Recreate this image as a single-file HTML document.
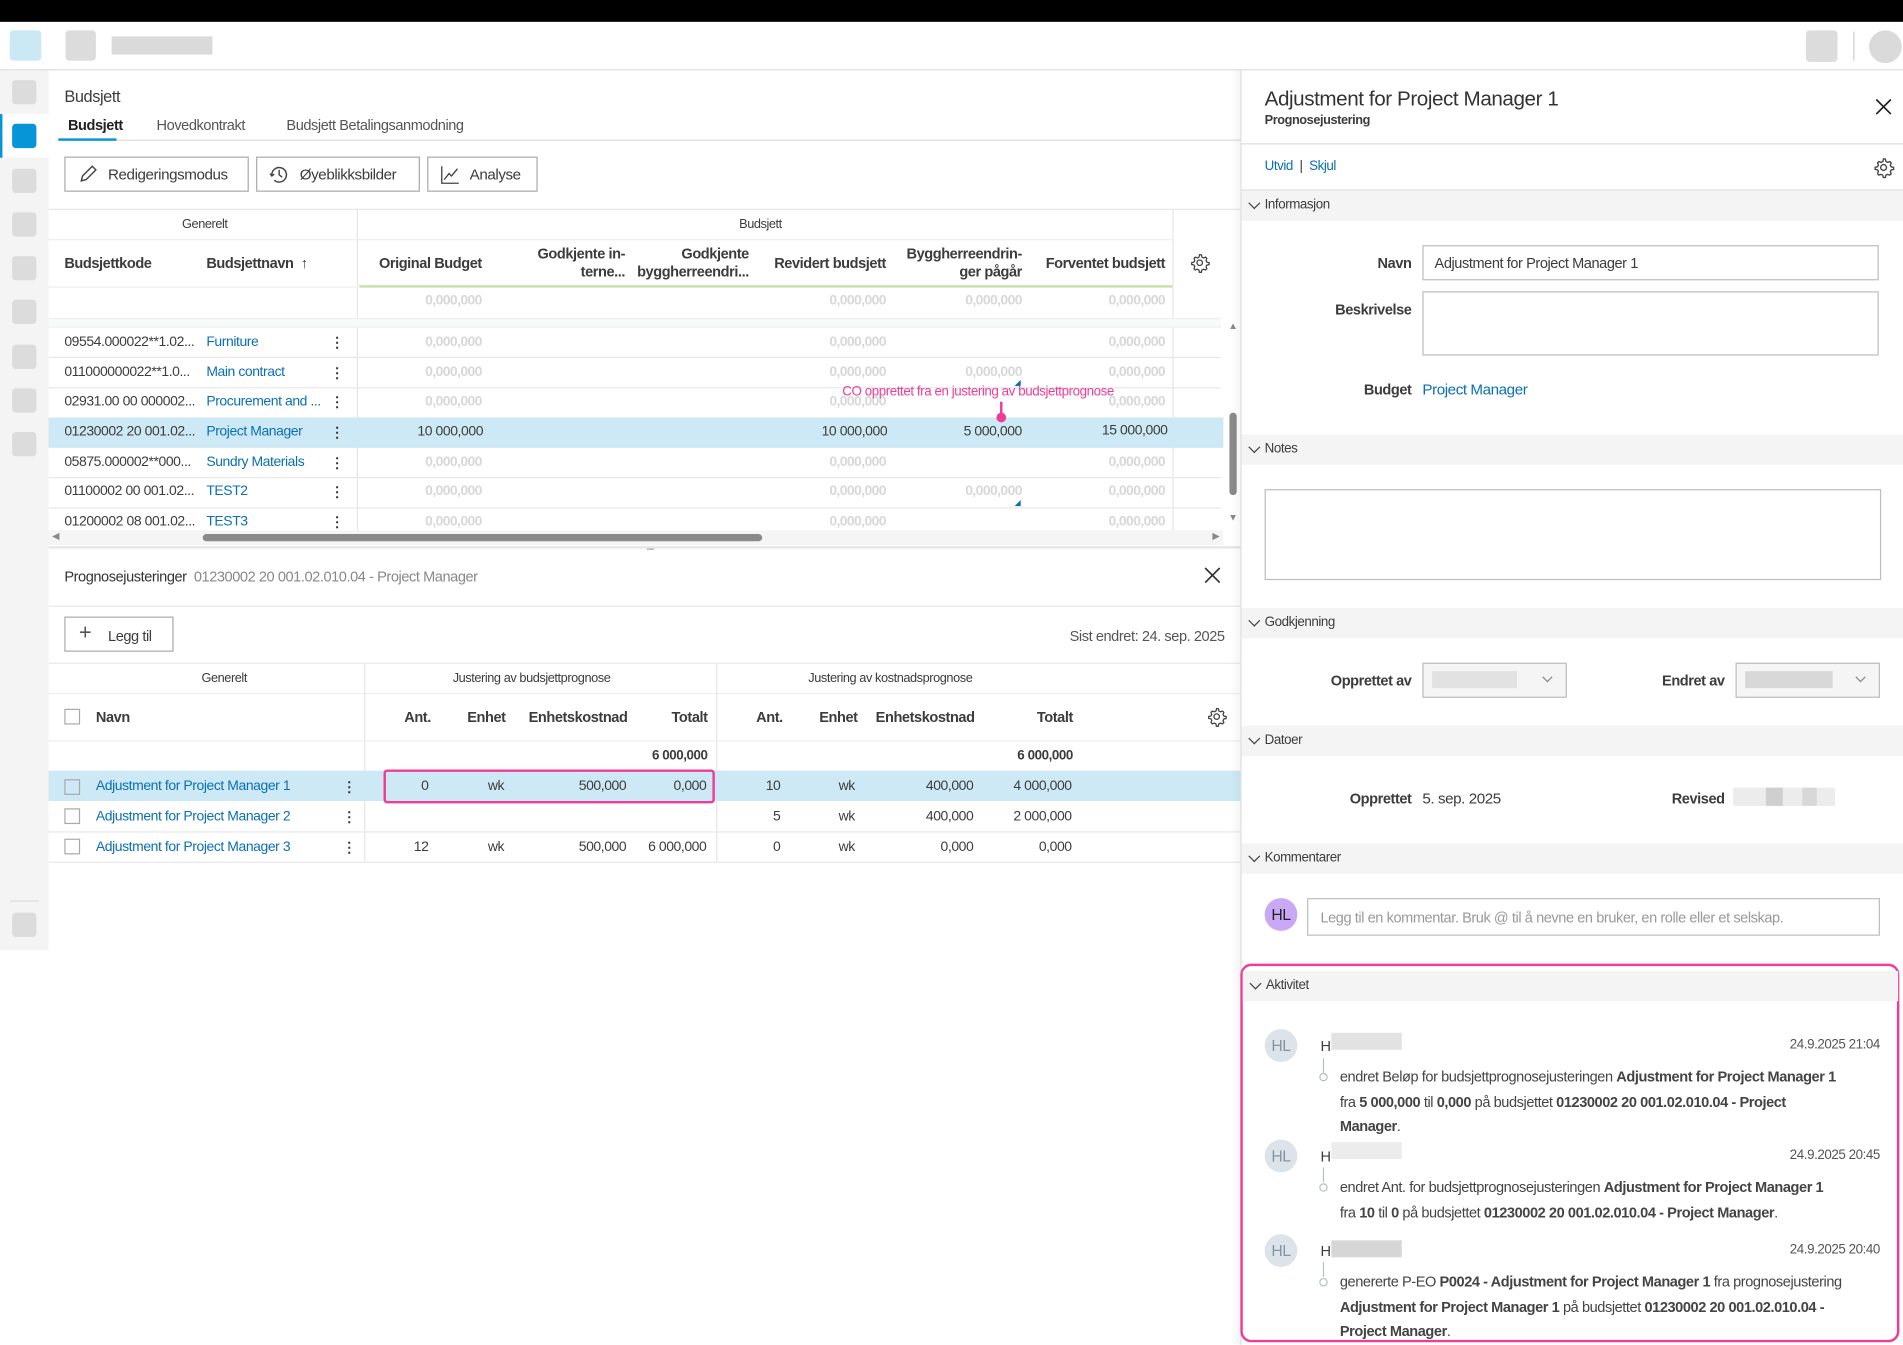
<!DOCTYPE html>
<html><head><meta charset="utf-8">
<style>
*{box-sizing:border-box;margin:0;padding:0}
html,body{width:1903px;height:1344px;overflow:hidden;background:#fff}
body{font-family:"Liberation Sans",sans-serif;color:#3c3c3c}
#w{position:absolute;left:0;top:0;width:1568px;height:1108px;transform:scale(1.21365);transform-origin:0 0;font-size:11.5px;letter-spacing:-0.35px}
.a{position:absolute;white-space:nowrap}
.g{background:#dcdcdc;border-radius:3px}
.hl{border-top:1px solid #e8e8e8}
.lnk{color:#0a6fb5}
.b{font-weight:bold}
.ph{color:#d8d8d8;font-weight:bold;letter-spacing:-0.5px}
.r{text-align:right}
.sec{position:absolute;left:1023px;width:545px;height:25px;background:#f4f4f4;font-size:11px;line-height:25px;padding-left:19px}
.sec:before{content:"";position:absolute;left:7px;top:7px;width:6px;height:6px;border-right:1.3px solid #444;border-bottom:1.3px solid #444;transform:rotate(45deg)}
.inp{position:absolute;border:1px solid #bdbdbd;background:#fff}
.lbl{position:absolute;font-weight:bold;text-align:right;font-size:12px}
.av{position:absolute;width:27px;height:27px;border-radius:50%;text-align:center;line-height:27px;font-size:13px}
.act{position:absolute;left:1104px;font-size:12px;line-height:20.5px;white-space:nowrap;color:#444}
.kb{position:absolute;width:3px}
.kb:before{content:"⋮";font-weight:bold;color:#333}
</style></head><body><div id="w">
<!-- top -->
<div class="a" style="left:0;top:0;width:1568px;height:18px;background:#000"></div>
<div class="a" style="left:8px;top:25px;width:26px;height:25px;background:#cbe8f5;border-radius:3px"></div>
<div class="a g" style="left:54px;top:25px;width:25px;height:25px"></div>
<div class="a" style="left:92px;top:30px;width:83px;height:15px;background:#dadada"></div>
<div class="a g" style="left:1488px;top:25px;width:26px;height:26px"></div>
<div class="a" style="left:1527px;top:26px;width:1px;height:24px;background:#ccc"></div>
<div class="a" style="left:1540px;top:25px;width:27px;height:27px;border-radius:50%;background:#dadada"></div>
<div class="a" style="left:0;top:57px;width:1568px;height:1px;background:#ddd"></div>
<!-- sidebar -->
<div class="a" style="left:0;top:58px;width:40px;height:725px;background:#f4f4f4"></div>
<div class="a" style="left:0;top:94px;width:40px;height:36px;background:#fff;border-left:2px solid #0696d7"></div>
<div class="a g" style="left:10px;top:66px;width:20px;height:20px"></div>
<div class="a" style="left:10px;top:102px;width:20px;height:20px;background:#0696d7;border-radius:3px"></div>
<div class="a g" style="left:10px;top:139px;width:20px;height:20px"></div>
<div class="a g" style="left:10px;top:175px;width:20px;height:20px"></div>
<div class="a g" style="left:10px;top:211px;width:20px;height:20px"></div>
<div class="a g" style="left:10px;top:247px;width:20px;height:20px"></div>
<div class="a g" style="left:10px;top:284px;width:20px;height:20px"></div>
<div class="a g" style="left:10px;top:320px;width:20px;height:20px"></div>
<div class="a g" style="left:10px;top:356px;width:20px;height:20px"></div>
<div class="a" style="left:8px;top:742px;width:24px;height:1px;background:#ddd"></div>
<div class="a g" style="left:10px;top:752px;width:20px;height:20px"></div>
<!-- page header -->
<div class="a" style="left:53px;top:72px;font-size:13.5px">Budsjett</div>
<div class="a b" style="left:56px;top:96px;font-size:12px;color:#222">Budsjett</div>
<div class="a" style="left:129px;top:96px;font-size:12px;color:#555">Hovedkontrakt</div>
<div class="a" style="left:236px;top:96px;font-size:12px;color:#555">Budsjett Betalingsanmodning</div>
<div class="a" style="left:48px;top:115px;width:974px;height:1px;background:#ddd"></div>
<div class="a" style="left:48px;top:114px;width:48px;height:2px;background:#0696d7"></div>
<!-- buttons -->
<div class="a" style="left:53px;top:129px;width:152px;height:29px;border:1px solid #aaa"></div>
<svg class="a" style="left:64px;top:135px" width="17" height="17" viewBox="0 0 17 17"><path d="M3 14l1-4 8-8 3 3-8 8z" fill="none" stroke="#444" stroke-width="1.2"/></svg>
<div class="a" style="left:89px;top:137px;font-size:12.5px">Redigeringsmodus</div>
<div class="a" style="left:211px;top:129px;width:135px;height:29px;border:1px solid #aaa"></div>
<svg class="a" style="left:221px;top:135px" width="18" height="18" viewBox="0 0 18 18"><path d="M3 9a6 6 0 1 1 2 4.5M1.5 8l1.5 2 2-1.6M9 5v4l2.5 2" fill="none" stroke="#444" stroke-width="1.2"/></svg>
<div class="a" style="left:247px;top:137px;font-size:12.5px">Øyeblikksbilder</div>
<div class="a" style="left:352px;top:129px;width:91px;height:29px;border:1px solid #aaa"></div>
<svg class="a" style="left:362px;top:135px" width="18" height="18" viewBox="0 0 18 18"><path d="M2 2v14h14M4 13l4-5 2 2 5-6" fill="none" stroke="#444" stroke-width="1.1"/></svg>
<div class="a" style="left:387px;top:137px;font-size:12.5px">Analyse</div>
<!-- top table -->
<div class="a" style="left:40px;top:172px;width:982px;height:1px;background:#e8e8e8"></div>
<div class="a" style="left:294px;top:172px;width:1px;height:266px;background:#e6e6e6"></div>
<div class="a" style="left:966px;top:172px;width:1px;height:266px;background:#e6e6e6"></div>
<div class="a" style="left:150px;top:179px;font-size:10.5px">Generelt</div>
<div class="a" style="left:609px;top:179px;font-size:10.5px">Budsjett</div>
<div class="a" style="left:40px;top:197px;width:926px;height:1px;background:#eee"></div>
<div class="a b" style="left:53px;top:210px;font-size:12px">Budsjettkode</div>
<div class="a b" style="left:170px;top:210px;font-size:12px">Budsjettnavn&nbsp; ↑</div>
<div class="a b r" style="left:290px;width:107px;top:210px;font-size:12px">Original Budget</div>
<div class="a b r" style="left:400px;width:115px;top:202px;font-size:12px;line-height:15px">Godkjente in-<br>terne...</div>
<div class="a b r" style="left:510px;width:107px;top:202px;font-size:12px;line-height:15px">Godkjente<br>byggherreendri...</div>
<div class="a b r" style="left:620px;width:110px;top:210px;font-size:12px">Revidert budsjett</div>
<div class="a b r" style="left:730px;width:112px;top:202px;font-size:12px;line-height:15px">Byggherreendrin-<br>ger pågår</div>
<div class="a b r" style="left:845px;width:115px;top:210px;font-size:12px">Forventet budsjett</div>
<svg class="a" style="left:980px;top:208px" width="17" height="17" viewBox="0 0 24 24"><path d="M12 2.5l2 .3.6 2.6 1.8 1 2.5-.9 1.4 1.5-.9 2.5 1 1.8 2.6.6v2.2l-2.6.6-1 1.8.9 2.5-1.5 1.4-2.5-.9-1.8 1-.6 2.6h-2.2l-.6-2.6-1.8-1-2.5.9-1.4-1.5.9-2.5-1-1.8-2.6-.6v-2.2l2.6-.6 1-1.8-.9-2.5 1.5-1.4 2.5.9 1.8-1 .6-2.6z" fill="none" stroke="#444" stroke-width="1.5"/><circle cx="12" cy="12" r="3.2" fill="none" stroke="#444" stroke-width="1.5"/></svg>
<div class="a" style="left:296px;top:235px;width:670px;height:2px;background:#c6e0a8"></div>
<div class="a" style="left:40px;top:236px;width:254px;height:1px;background:#eee"></div>
<div class="a ph r" style="left:300px;width:97px;top:242px">0,000,000</div>
<div class="a ph r" style="left:620px;width:110px;top:242px">0,000,000</div>
<div class="a ph r" style="left:730px;width:112px;top:242px">0,000,000</div>
<div class="a ph r" style="left:845px;width:115px;top:242px">0,000,000</div>
<div class="a" style="left:40px;top:262px;width:966px;height:8px;background:#f9fafa;border-top:1px solid #eee;border-bottom:1px solid #eee"></div>
<!-- rows -->
<div class="a" style="left:40px;top:344px;width:968px;height:25px;background:#cde9f5"></div>
<div class="a hl" style="left:40px;top:294px;width:966px"></div>
<div class="a hl" style="left:40px;top:319px;width:966px"></div>
<div class="a hl" style="left:40px;top:393px;width:966px"></div>
<div class="a hl" style="left:40px;top:418px;width:966px"></div>

<div class="a" style="left:53px;top:276px">09554.000022**1.02...</div><div class="a lnk" style="left:170px;top:276px">Furniture</div><div class="kb a" style="left:272px;top:275px"></div>
<div class="a" style="left:53px;top:301px">011000000022**1.0...</div><div class="a lnk" style="left:170px;top:301px">Main contract</div><div class="kb a" style="left:272px;top:300px"></div>
<div class="a" style="left:53px;top:325px">02931.00 00 000002...</div><div class="a lnk" style="left:170px;top:325px">Procurement and ...</div><div class="kb a" style="left:272px;top:324px"></div>
<div class="a" style="left:53px;top:350px">01230002 20 001.02...</div><div class="a lnk" style="left:170px;top:350px">Project Manager</div><div class="kb a" style="left:272px;top:349px"></div>
<div class="a" style="left:53px;top:375px">05875.000002**000...</div><div class="a lnk" style="left:170px;top:375px">Sundry Materials</div><div class="kb a" style="left:272px;top:374px"></div>
<div class="a" style="left:53px;top:399px">01100002 00 001.02...</div><div class="a lnk" style="left:170px;top:399px">TEST2</div><div class="kb a" style="left:272px;top:398px"></div>
<div class="a" style="left:53px;top:424px">01200002 08 001.02...</div><div class="a lnk" style="left:170px;top:424px">TEST3</div><div class="kb a" style="left:272px;top:423px"></div>

<div class="a ph r" style="left:300px;width:97px;top:276px">0,000,000</div><div class="a ph r" style="left:620px;width:110px;top:276px">0,000,000</div><div class="a ph r" style="left:845px;width:115px;top:276px">0,000,000</div>
<div class="a ph r" style="left:300px;width:97px;top:301px">0,000,000</div><div class="a ph r" style="left:620px;width:110px;top:301px">0,000,000</div><div class="a ph r" style="left:730px;width:112px;top:301px">0,000,000</div><div class="a ph r" style="left:845px;width:115px;top:301px">0,000,000</div>
<div class="a ph r" style="left:300px;width:97px;top:325px">0,000,000</div><div class="a ph r" style="left:620px;width:110px;top:325px">0,000,000</div><div class="a ph r" style="left:845px;width:115px;top:325px">0,000,000</div>
<div class="a r" style="left:300px;width:98px;top:350px">10 000,000</div><div class="a r" style="left:620px;width:111px;top:350px">10 000,000</div><div class="a r" style="left:730px;width:112px;top:350px">5 000,000</div><div class="a r" style="left:845px;width:117px;top:349px">15 000,000</div>
<div class="a ph r" style="left:300px;width:97px;top:375px">0,000,000</div><div class="a ph r" style="left:620px;width:110px;top:375px">0,000,000</div><div class="a ph r" style="left:845px;width:115px;top:375px">0,000,000</div>
<div class="a ph r" style="left:300px;width:97px;top:399px">0,000,000</div><div class="a ph r" style="left:620px;width:110px;top:399px">0,000,000</div><div class="a ph r" style="left:730px;width:112px;top:399px">0,000,000</div><div class="a ph r" style="left:845px;width:115px;top:399px">0,000,000</div>
<div class="a ph r" style="left:300px;width:97px;top:424px">0,000,000</div><div class="a ph r" style="left:620px;width:110px;top:424px">0,000,000</div><div class="a ph r" style="left:845px;width:115px;top:424px">0,000,000</div>
<div class="a" style="left:836px;top:313px;width:0;height:0;border-left:5px solid transparent;border-bottom:5px solid #0a6fb5"></div>
<div class="a" style="left:836px;top:412px;width:0;height:0;border-left:5px solid transparent;border-bottom:5px solid #0a6fb5"></div>
<div class="a" style="left:694px;top:317px;color:#f03c96;font-size:11px">CO opprettet fra en justering av budsjettprognose</div>
<div class="a" style="left:824px;top:331px;width:2px;height:12px;background:#f03c96"></div>
<div class="a" style="left:821px;top:340px;width:8px;height:8px;border-radius:50%;background:#f03c96"></div>
<!-- scrollbars -->
<div class="a" style="left:1012px;top:264px;color:#888;font-size:8px">▲</div>
<div class="a" style="left:1013px;top:340px;width:6px;height:68px;background:#8a8a8a;border-radius:3px"></div>
<div class="a" style="left:1012px;top:422px;color:#888;font-size:8px">▼</div>
<div class="a" style="left:40px;top:437px;width:968px;height:12px;background:#f5f5f5"></div>
<div class="a" style="left:43px;top:437px;color:#888;font-size:8px">◀</div>
<div class="a" style="left:167px;top:440px;width:461px;height:6px;background:#8a8a8a;border-radius:3px"></div>
<div class="a" style="left:999px;top:437px;color:#888;font-size:8px">▶</div>
<div class="a" style="left:40px;top:450px;width:982px;height:2px;background:#e6e6e6"></div>
<div class="a" style="left:533px;top:452px;width:6px;height:1px;background:#aaa"></div>
<!-- bottom panel -->
<div class="a" style="left:53px;top:468px;font-size:12px;color:#333">Prognosejusteringer <span style="color:#888">&nbsp;01230002 20 001.02.010.04 - Project Manager</span></div>
<svg class="a" style="left:992px;top:467px" width="14" height="14"><path d="M1 1l12 12M13 1L1 13" stroke="#333" stroke-width="1.4"/></svg>
<div class="a" style="left:40px;top:499px;width:982px;height:1px;background:#e8e8e8"></div>
<div class="a" style="left:53px;top:508px;width:90px;height:29px;border:1px solid #aaa"></div>
<div class="a" style="left:65px;top:511px;font-size:18px;color:#555;font-weight:300">+</div>
<div class="a" style="left:89px;top:517px;font-size:12px">Legg til</div>
<div class="a r" style="left:800px;width:209px;top:517px;font-size:12px;color:#555">Sist endret: 24. sep. 2025</div>
<div class="a" style="left:40px;top:546px;width:982px;height:1px;background:#e8e8e8"></div>
<div class="a" style="left:300px;top:547px;width:1px;height:163px;background:#e6e6e6"></div>
<div class="a" style="left:590px;top:547px;width:1px;height:163px;background:#e6e6e6"></div>
<div class="a" style="left:166px;top:553px;font-size:10.5px">Generelt</div>
<div class="a" style="left:373px;top:553px;font-size:10.5px">Justering av budsjettprognose</div>
<div class="a" style="left:666px;top:553px;font-size:10.5px">Justering av kostnadsprognose</div>
<div class="a" style="left:40px;top:571px;width:982px;height:1px;background:#eee"></div>
<div class="a" style="left:53px;top:584px;width:13px;height:13px;border:1px solid #aaa;background:#fff"></div>
<div class="a b" style="left:79px;top:584px;font-size:12px">Navn</div>
<div class="a b r" style="left:310px;width:45px;top:584px;font-size:12px">Ant.</div>
<div class="a b" style="left:385px;top:584px;font-size:12px">Enhet</div>
<div class="a b r" style="left:420px;width:97px;top:584px;font-size:12px">Enhetskostnad</div>
<div class="a b r" style="left:520px;width:63px;top:584px;font-size:12px">Totalt</div>
<div class="a b r" style="left:600px;width:45px;top:584px;font-size:12px">Ant.</div>
<div class="a b" style="left:675px;top:584px;font-size:12px">Enhet</div>
<div class="a b r" style="left:700px;width:103px;top:584px;font-size:12px">Enhetskostnad</div>
<div class="a b r" style="left:810px;width:74px;top:584px;font-size:12px">Totalt</div>
<svg class="a" style="left:994px;top:582px" width="17" height="17" viewBox="0 0 24 24"><path d="M12 2.5l2 .3.6 2.6 1.8 1 2.5-.9 1.4 1.5-.9 2.5 1 1.8 2.6.6v2.2l-2.6.6-1 1.8.9 2.5-1.5 1.4-2.5-.9-1.8 1-.6 2.6h-2.2l-.6-2.6-1.8-1-2.5.9-1.4-1.5.9-2.5-1-1.8-2.6-.6v-2.2l2.6-.6 1-1.8-.9-2.5 1.5-1.4 2.5.9 1.8-1 .6-2.6z" fill="none" stroke="#444" stroke-width="1.5"/><circle cx="12" cy="12" r="3.2" fill="none" stroke="#444" stroke-width="1.5"/></svg>
<div class="a" style="left:40px;top:610px;width:982px;height:1px;background:#eee"></div>
<div class="a b r" style="left:520px;width:63px;top:617px;font-size:11px">6 000,000</div>
<div class="a b r" style="left:810px;width:74px;top:617px;font-size:11px">6 000,000</div>
<div class="a" style="left:40px;top:635px;width:982px;height:25px;background:#cde9f5"></div>
<div class="a hl" style="left:40px;top:685px;width:982px"></div>
<div class="a hl" style="left:40px;top:710px;width:982px"></div>
<div class="a" style="left:316px;top:634px;width:273px;height:28px;border:2px solid #f03c96;border-radius:3px"></div>
<!-- rows bottom -->
<div class="a" style="left:53px;top:642px;width:13px;height:13px;border:1px solid #aaa"></div>
<div class="a lnk" style="left:79px;top:642px">Adjustment for Project Manager 1</div><div class="kb a" style="left:282px;top:641px"></div>
<div class="a r" style="left:310px;width:43px;top:642px">0</div><div class="a" style="left:402px;top:642px">wk</div><div class="a r" style="left:420px;width:96px;top:642px">500,000</div><div class="a r" style="left:520px;width:62px;top:642px">0,000</div>
<div class="a r" style="left:600px;width:43px;top:642px">10</div><div class="a" style="left:691px;top:642px">wk</div><div class="a r" style="left:700px;width:102px;top:642px">400,000</div><div class="a r" style="left:810px;width:73px;top:642px">4 000,000</div>
<div class="a" style="left:53px;top:666px;width:13px;height:13px;border:1px solid #aaa"></div>
<div class="a lnk" style="left:79px;top:667px">Adjustment for Project Manager 2</div><div class="kb a" style="left:282px;top:666px"></div>
<div class="a r" style="left:600px;width:43px;top:667px">5</div><div class="a" style="left:691px;top:667px">wk</div><div class="a r" style="left:700px;width:102px;top:667px">400,000</div><div class="a r" style="left:810px;width:73px;top:667px">2 000,000</div>
<div class="a" style="left:53px;top:691px;width:13px;height:13px;border:1px solid #aaa"></div>
<div class="a lnk" style="left:79px;top:692px">Adjustment for Project Manager 3</div><div class="kb a" style="left:282px;top:691px"></div>
<div class="a r" style="left:310px;width:43px;top:692px">12</div><div class="a" style="left:402px;top:692px">wk</div><div class="a r" style="left:420px;width:96px;top:692px">500,000</div><div class="a r" style="left:520px;width:62px;top:692px">6 000,000</div>
<div class="a r" style="left:600px;width:43px;top:692px">0</div><div class="a" style="left:691px;top:692px">wk</div><div class="a r" style="left:700px;width:102px;top:692px">0,000</div><div class="a r" style="left:810px;width:73px;top:692px">0,000</div>

<!-- drawer -->
<div class="a" style="left:1014px;top:58px;width:8px;height:1050px;background:linear-gradient(90deg,rgba(0,0,0,0),rgba(0,0,0,0.04))"></div>
<div class="a" style="left:1022px;top:58px;width:1px;height:1050px;background:#ddd"></div>
<div class="a" style="left:1042px;top:72px;font-size:17px;color:#333">Adjustment for Project Manager 1</div>
<div class="a b" style="left:1042px;top:93px;font-size:10.5px">Prognosejustering</div>
<svg class="a" style="left:1545px;top:81px" width="14" height="14"><path d="M1 1l12 12M13 1L1 13" stroke="#222" stroke-width="1.4"/></svg>
<div class="a" style="left:1023px;top:118px;width:545px;height:1px;background:#ddd"></div>
<div class="a lnk" style="left:1042px;top:131px;font-size:11px">Utvid&nbsp; <span style="color:#333">|</span>&nbsp; Skjul</div>
<svg class="a" style="left:1543px;top:129px" width="18" height="18" viewBox="0 0 24 24"><path d="M12 2.5l2 .3.6 2.6 1.8 1 2.5-.9 1.4 1.5-.9 2.5 1 1.8 2.6.6v2.2l-2.6.6-1 1.8.9 2.5-1.5 1.4-2.5-.9-1.8 1-.6 2.6h-2.2l-.6-2.6-1.8-1-2.5.9-1.4-1.5.9-2.5-1-1.8-2.6-.6v-2.2l2.6-.6 1-1.8-.9-2.5 1.5-1.4 2.5.9 1.8-1 .6-2.6z" fill="none" stroke="#444" stroke-width="1.5"/><circle cx="12" cy="12" r="3.2" fill="none" stroke="#444" stroke-width="1.5"/></svg>
<div class="a" style="left:1023px;top:156px;width:545px;height:1px;background:#ddd"></div>
<div class="sec" style="top:157px">Informasjon</div>
<div class="lbl" style="left:1060px;width:103px;top:210px">Navn</div>
<div class="inp" style="left:1172px;top:202px;width:376px;height:29px"></div>
<div class="a" style="left:1182px;top:210px;font-size:12px">Adjustment for Project Manager 1</div>
<div class="lbl" style="left:1060px;width:103px;top:248px">Beskrivelse</div>
<div class="inp" style="left:1172px;top:240px;width:376px;height:53px"></div>
<div class="lbl" style="left:1060px;width:103px;top:314px">Budget</div>
<div class="a lnk" style="left:1172px;top:314px;font-size:12.5px">Project Manager</div>
<div class="sec" style="top:358px">Notes</div>
<div class="inp" style="left:1042px;top:403px;width:508px;height:75px"></div>
<div class="sec" style="top:501px">Godkjenning</div>
<div class="lbl" style="left:1060px;width:103px;top:554px">Opprettet av</div>
<div class="inp" style="left:1172px;top:546px;width:119px;height:29px;background:#f5f5f5"></div>
<div class="a" style="left:1180px;top:553px;width:70px;height:14px;background:#e2e2e2"></div>
<div class="a" style="left:1272px;top:555px;width:6px;height:6px;border-right:1px solid #888;border-bottom:1px solid #888;transform:rotate(45deg)"></div>
<div class="lbl" style="left:1320px;width:101px;top:554px">Endret av</div>
<div class="inp" style="left:1430px;top:546px;width:119px;height:29px;background:#f5f5f5"></div>
<div class="a" style="left:1438px;top:553px;width:72px;height:14px;background:#d8d8d8"></div>
<div class="a" style="left:1530px;top:555px;width:6px;height:6px;border-right:1px solid #888;border-bottom:1px solid #888;transform:rotate(45deg)"></div>
<div class="sec" style="top:598px">Datoer</div>
<div class="lbl" style="left:1060px;width:103px;top:651px">Opprettet</div>
<div class="a" style="left:1172px;top:651px;font-size:12.5px">5. sep. 2025</div>
<div class="lbl" style="left:1320px;width:101px;top:651px">Revised</div>
<div class="a" style="left:1428px;top:649px;width:84px;height:15px;background:#ececec"></div>
<div class="a" style="left:1455px;top:649px;width:14px;height:15px;background:#cfcfcf"></div>
<div class="a" style="left:1485px;top:649px;width:12px;height:15px;background:#d8d8d8"></div>
<div class="sec" style="top:695px">Kommentarer</div>
<div class="av" style="left:1042px;top:740px;background:#c9a9f6;color:#222">HL</div>
<div class="inp" style="left:1077px;top:740px;width:472px;height:31px"></div>
<div class="a" style="left:1088px;top:749px;font-size:12px;color:#999">Legg til en kommentar. Bruk @ til å nevne en bruker, en rolle eller et selskap.</div>
<!-- aktivitet -->
<div class="a" style="left:1022px;top:794px;width:543px;height:312px;border:2px solid #f03c96;border-radius:9px"></div>
<div class="sec" style="top:800px;left:1024px;width:540px">Aktivitet</div>

<div class="av" style="left:1042px;top:848px;background:#dde3ea;color:#8893a0">HL</div>
<div class="a" style="left:1088px;top:855px;font-size:12px">H</div>
<div class="a" style="left:1097px;top:851px;width:58px;height:14px;background:#e2e2e2"></div>
<div class="a r" style="left:1400px;width:149px;top:855px;font-size:11px;color:#555">24.9.2025 21:04</div>
<div class="a" style="left:1090px;top:872px;width:1px;height:12px;background:#b5bec8"></div>
<div class="a" style="left:1087px;top:884px;width:7px;height:7px;border:1px solid #b5bec8;border-radius:50%"></div>
<div class="act" style="top:877px">endret Beløp for budsjettprognosejusteringen <b>Adjustment for Project Manager 1</b><br>fra <b>5 000,000</b> til <b>0,000</b> på budsjettet <b>01230002 20 001.02.010.04 - Project</b><br><b>Manager</b>.</div>

<div class="av" style="left:1042px;top:939px;background:#dde3ea;color:#8893a0">HL</div>
<div class="a" style="left:1088px;top:946px;font-size:12px">H</div>
<div class="a" style="left:1097px;top:941px;width:58px;height:14px;background:#ececec"></div>
<div class="a r" style="left:1400px;width:149px;top:946px;font-size:11px;color:#555">24.9.2025 20:45</div>
<div class="a" style="left:1090px;top:962px;width:1px;height:12px;background:#b5bec8"></div>
<div class="a" style="left:1087px;top:975px;width:7px;height:7px;border:1px solid #b5bec8;border-radius:50%"></div>
<div class="act" style="top:968px">endret Ant. for budsjettprognosejusteringen <b>Adjustment for Project Manager 1</b><br>fra <b>10</b> til <b>0</b> på budsjettet <b>01230002 20 001.02.010.04 - Project Manager</b>.</div>

<div class="av" style="left:1042px;top:1017px;background:#dde3ea;color:#8893a0">HL</div>
<div class="a" style="left:1088px;top:1024px;font-size:12px">H</div>
<div class="a" style="left:1097px;top:1022px;width:58px;height:14px;background:#d6d6d6"></div>
<div class="a r" style="left:1400px;width:149px;top:1024px;font-size:11px;color:#555">24.9.2025 20:40</div>
<div class="a" style="left:1090px;top:1040px;width:1px;height:12px;background:#b5bec8"></div>
<div class="a" style="left:1087px;top:1053px;width:7px;height:7px;border:1px solid #b5bec8;border-radius:50%"></div>
<div class="act" style="top:1046px">genererte P-EO <b>P0024 - Adjustment for Project Manager 1</b> fra prognosejustering<br><b>Adjustment for Project Manager 1</b> på budsjettet <b>01230002 20 001.02.010.04 -</b><br><b>Project Manager</b>.</div>
</div></body></html>
